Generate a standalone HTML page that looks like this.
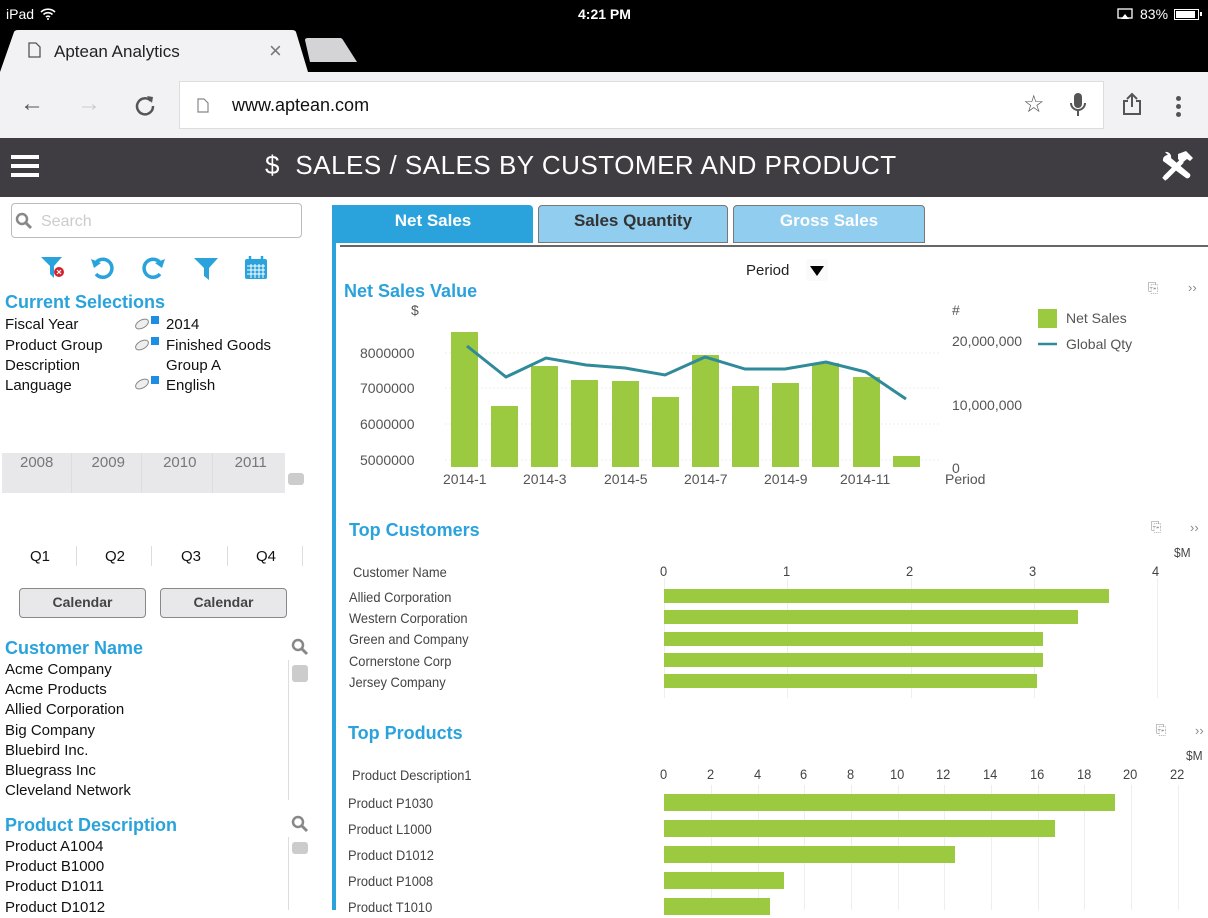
<!DOCTYPE html>
<html><head><meta charset="utf-8"><style>
*{margin:0;padding:0;box-sizing:border-box}
body{width:1208px;height:910px;overflow:hidden;background:#fff;font-family:"Liberation Sans",sans-serif;position:relative;color:#111}
.a{position:absolute;white-space:nowrap}
.blue{color:#2aa3dc;font-weight:bold}
.g{background:#9bc93f;position:absolute}
.lbl{position:absolute;font-size:14px;color:#444;white-space:nowrap;transform:scaleX(.92);transform-origin:left}
.vl{position:absolute;width:1px;background:#eee}
</style></head><body>
<!-- status bar + tabs -->
<div class="a" style="left:0;top:0;width:1208px;height:72px;background:#000"></div>
<div class="a" style="left:6px;top:6px;color:#fff;font-size:14px">iPad</div>
<svg class="a" style="left:40px;top:8px" width="16" height="12" viewBox="0 0 16 12"><path d="M1 4a10 10 0 0 1 14 0M3.5 6.5a6.5 6.5 0 0 1 9 0M6 9a3 3 0 0 1 4 0" stroke="#fff" stroke-width="1.6" fill="none"/><circle cx="8" cy="11" r="1" fill="#fff"/></svg>
<div class="a" style="left:578px;top:6px;color:#fff;font-size:14px;font-weight:bold">4:21 PM</div>
<svg class="a" style="left:1117px;top:8px" width="16" height="12"><rect x="1" y="1" width="14" height="9" fill="none" stroke="#fff" stroke-width="1.3"/><path d="M4 11L8 6L12 11Z" fill="#fff"/></svg>
<div class="a" style="left:1140px;top:6px;color:#fff;font-size:14px">83%</div>
<div class="a" style="left:1174px;top:9px;width:25px;height:11px;border:1px solid #fff;padding:1px"><div style="width:19px;height:7px;background:#fff"></div></div>
<div class="a" style="left:1200px;top:12px;width:2px;height:4px;background:#fff"></div>
<svg class="a" style="left:0;top:30px" width="370" height="42"><path d="M0 42L14 2Q15 0 18 0H292Q295 0 296 2L308 42Z" fill="#f2f1f4"/><path d="M305 10Q305 8 308 8H340Q342 8 343 10L357 32H310Z" fill="#d4d3d6"/></svg>
<svg class="a" style="left:28px;top:42px" width="13" height="16"><path d="M1 1H8L12 5V15H1Z" fill="none" stroke="#555" stroke-width="1.3"/></svg>
<div class="a" style="left:54px;top:42px;font-size:17px;color:#222">Aptean Analytics</div>
<div class="a" style="left:269px;top:38px;font-size:22px;color:#777">×</div>
<!-- toolbar -->
<div class="a" style="left:0;top:72px;width:1208px;height:66px;background:#f2f1f4"></div>
<div class="a" style="left:20px;top:90px;font-size:24px;color:#555">←</div>
<div class="a" style="left:77px;top:90px;font-size:24px;color:#ccc">→</div>
<svg class="a" style="left:134px;top:94px" width="22" height="22"><path d="M17 7A8 8 0 1 0 19 12" fill="none" stroke="#555" stroke-width="2.5"/><path d="M13 2L19 3L18 9Z" fill="#555"/></svg>
<div class="a" style="left:179px;top:81px;width:925px;height:48px;background:#fff;border:1px solid #ddd"></div>
<svg class="a" style="left:197px;top:98px" width="12" height="15"><path d="M1 1H7L11 5V14H1Z" fill="none" stroke="#888" stroke-width="1.2"/></svg>
<div class="a" style="left:232px;top:95px;font-size:18px;color:#111">www.aptean.com</div>
<div class="a" style="left:1023px;top:90px;font-size:24px;color:#555">☆</div>
<svg class="a" style="left:1068px;top:92px" width="20" height="26"><rect x="6" y="1" width="8" height="15" rx="4" fill="#555"/><path d="M3 11A7 7 0 0 0 17 11M10 18V24" stroke="#555" stroke-width="2" fill="none"/></svg>
<svg class="a" style="left:1121px;top:92px" width="22" height="24"><path d="M7 9H3V22H19V9H15M11 15V2M6 7L11 2L16 7" stroke="#555" stroke-width="2" fill="none"/></svg>
<div class="a" style="left:1176px;top:96px;width:5px;height:5px;border-radius:3px;background:#555;box-shadow:0 8px 0 #555,0 16px 0 #555"></div>
<!-- header -->
<div class="a" style="left:0;top:138px;width:1208px;height:59px;background:#3f3d41"></div>
<div class="a" style="left:11px;top:155px;width:28px;height:4px;background:#fff;box-shadow:0 9px 0 #fff,0 18px 0 #fff"></div>
<div class="a" style="left:265px;top:150px;font-size:26px;color:#fff;letter-spacing:.5px">$&nbsp; SALES / SALES BY CUSTOMER AND PRODUCT</div>
<svg class="a" style="left:1160px;top:151px" width="34" height="30" viewBox="0 0 34 30"><path d="M5 27L22 10M4 25L7 28" stroke="#fff" stroke-width="5"/><path d="M18 3L26 0L33 7L30 10L27 8L22 12L18 8Z" fill="#fff"/><path d="M8 4A5 5 0 0 0 3 10L26 27A3 3 0 0 0 30 23L11 7A5 5 0 0 0 5 1L8 4Z" fill="#fff"/></svg>
<!-- left panel -->
<div class="a" style="left:11px;top:203px;width:291px;height:35px;border:1px solid #bbb;border-radius:4px"></div>
<svg class="a" style="left:15px;top:212px" width="18" height="18"><circle cx="7" cy="7" r="5" fill="none" stroke="#888" stroke-width="2.5"/><path d="M11 11L16 16" stroke="#888" stroke-width="3"/></svg>
<div class="a" style="left:41px;top:213px;font-size:16px;color:#ccc">Search</div>
<svg class="a" style="left:40px;top:256px" width="26" height="24"><path d="M1 1H22L14 10V22L10 18V10Z" fill="#2aa3dc"/><circle cx="19" cy="16" r="5" fill="#d3232c"/><path d="M17 14L21 18M21 14L17 18" stroke="#fff" stroke-width="1.2"/></svg>
<svg class="a" style="left:90px;top:256px" width="26" height="24"><path d="M5 8A9 9 0 1 1 6 18" fill="none" stroke="#2aa3dc" stroke-width="3.5"/><path d="M1 3L4 12L11 7Z" fill="#2aa3dc"/></svg>
<svg class="a" style="left:140px;top:256px" width="26" height="24"><path d="M21 8A9 9 0 1 0 20 18" fill="none" stroke="#2aa3dc" stroke-width="3.5"/><path d="M25 3L22 12L15 7Z" fill="#2aa3dc"/></svg>
<svg class="a" style="left:193px;top:256px" width="26" height="24"><path d="M1 2H25L16 12V24L11 20V12Z" fill="#2aa3dc"/></svg>
<svg class="a" style="left:244px;top:255px" width="24" height="25"><rect x="1" y="4" width="22" height="20" rx="2" fill="#2aa3dc"/><path d="M6 1V6M18 1V6" stroke="#2aa3dc" stroke-width="2.5"/><path d="M3 11H21M3 15H21M3 19H21M7 9V23M11 9V23M15 9V23M19 9V23" stroke="#fff" stroke-width="1"/></svg>
<div class="a blue" style="left:5px;top:292px;font-size:18px">Current Selections</div>
<div class="a" style="left:5px;top:315px;font-size:15px;line-height:20px">Fiscal Year<br><span style="line-height:21px">Product Group</span><br>Description<br>Language</div>
<div class="a" style="left:166px;top:315px;font-size:15px;line-height:20px">2014<br><span style="line-height:21px">Finished Goods</span><br>Group A<br>English</div>
<svg class="a" style="left:134px;top:316px" width="28" height="14"><ellipse cx="8" cy="8" rx="7" ry="4" transform="rotate(-30 8 8)" fill="#eee" stroke="#888"/><rect x="17" y="0" width="8" height="8" fill="#1e8ee5"/></svg>
<svg class="a" style="left:134px;top:337px" width="28" height="14"><ellipse cx="8" cy="8" rx="7" ry="4" transform="rotate(-30 8 8)" fill="#eee" stroke="#888"/><rect x="17" y="0" width="8" height="8" fill="#1e8ee5"/></svg>
<svg class="a" style="left:134px;top:376px" width="28" height="14"><ellipse cx="8" cy="8" rx="7" ry="4" transform="rotate(-30 8 8)" fill="#eee" stroke="#888"/><rect x="17" y="0" width="8" height="8" fill="#1e8ee5"/></svg>
<div class="a" style="left:2px;top:453px;width:283px;height:40px;background:#e8e7ea"></div>
<div class="a" style="left:71px;top:453px;width:1px;height:40px;background:#ddd"></div>
<div class="a" style="left:141px;top:453px;width:1px;height:40px;background:#ddd"></div>
<div class="a" style="left:212px;top:453px;width:1px;height:40px;background:#ddd"></div>
<div class="a" style="left:20px;top:454px;font-size:15px;color:#777;word-spacing:34px">2008 2009 2010 2011</div>
<div class="a" style="left:288px;top:473px;width:16px;height:12px;background:#ccc;border-radius:3px"></div>
<div class="a" style="left:30px;top:548px;font-size:15px">Q1</div>
<div class="a" style="left:105px;top:548px;font-size:15px">Q2</div>
<div class="a" style="left:181px;top:548px;font-size:15px">Q3</div>
<div class="a" style="left:256px;top:548px;font-size:15px">Q4</div>
<div class="a" style="left:76px;top:546px;width:1px;height:20px;background:#ddd"></div>
<div class="a" style="left:151px;top:546px;width:1px;height:20px;background:#ddd"></div>
<div class="a" style="left:227px;top:546px;width:1px;height:20px;background:#ddd"></div>
<div class="a" style="left:302px;top:546px;width:1px;height:20px;background:#ddd"></div>
<div class="a" style="left:19px;top:588px;width:127px;height:30px;background:#e8e7ea;border:1px solid #888;border-radius:4px;font-size:14px;font-weight:bold;color:#444;text-align:center;line-height:26px">Calendar</div>
<div class="a" style="left:160px;top:588px;width:127px;height:30px;background:#e8e7ea;border:1px solid #888;border-radius:4px;font-size:14px;font-weight:bold;color:#444;text-align:center;line-height:26px">Calendar</div>
<div class="a blue" style="left:5px;top:638px;font-size:18px">Customer Name</div>
<svg class="a" style="left:291px;top:638px" width="18" height="18"><circle cx="7" cy="7" r="5" fill="none" stroke="#888" stroke-width="2.5"/><path d="M11 11L16 16" stroke="#888" stroke-width="3"/></svg>
<div class="a" style="left:5px;top:660px;font-size:15px;line-height:20.2px">Acme Company<br>Acme Products<br>Allied Corporation<br>Big Company<br>Bluebird Inc.<br>Bluegrass Inc<br>Cleveland Network</div>
<div class="a" style="left:288px;top:660px;width:1px;height:140px;background:#ddd"></div>
<div class="a" style="left:292px;top:665px;width:16px;height:17px;background:#ccc;border-radius:3px"></div>
<div class="a blue" style="left:5px;top:815px;font-size:18px">Product Description</div>
<svg class="a" style="left:291px;top:815px" width="18" height="18"><circle cx="7" cy="7" r="5" fill="none" stroke="#888" stroke-width="2.5"/><path d="M11 11L16 16" stroke="#888" stroke-width="3"/></svg>
<div class="a" style="left:5px;top:837px;font-size:15px;line-height:20.2px">Product A1004<br>Product B1000<br>Product D1011<br>Product D1012</div>
<div class="a" style="left:288px;top:837px;width:1px;height:73px;background:#ddd"></div>
<div class="a" style="left:292px;top:842px;width:16px;height:12px;background:#ccc;border-radius:3px"></div>
<!-- right panel -->
<div class="a" style="left:332px;top:205px;width:4px;height:705px;background:#2aa3dc"></div>
<div class="a" style="left:333px;top:205px;width:200px;height:38px;background:#2aa3dc;border-radius:4px 4px 0 0;color:#fff;font-size:17px;font-weight:bold;text-align:center;line-height:32px">Net Sales</div>
<div class="a" style="left:538px;top:205px;width:190px;height:38px;background:#90cdee;border:1px solid #777;border-radius:4px 4px 0 0;color:#333;font-size:17px;font-weight:bold;text-align:center;line-height:30px">Sales Quantity</div>
<div class="a" style="left:733px;top:205px;width:192px;height:38px;background:#90cdee;border:1px solid #777;border-radius:4px 4px 0 0;color:#fff;font-size:17px;font-weight:bold;text-align:center;line-height:30px">Gross Sales</div>
<div class="a" style="left:340px;top:245px;width:868px;height:2px;background:#666"></div>
<div class="a" style="left:746px;top:262px;font-size:15px;color:#222">Period</div>
<div class="a" style="left:806px;top:259px;width:22px;height:22px;background:#fafafa;border-radius:3px"></div>
<div class="a" style="left:810px;top:266px;width:0;height:0;border-left:7px solid transparent;border-right:7px solid transparent;border-top:10px solid #000"></div>
<div class="a blue" style="left:344px;top:281px;font-size:18px">Net Sales Value</div>
<div class="a" style="left:1148px;top:280px;font-size:13px;color:#888">⎘</div>
<div class="a" style="left:1188px;top:280px;font-size:13px;color:#888">››</div>
<svg class="a" style="left:340px;top:295px" width="868" height="200">
<g stroke="#eee" stroke-dasharray="2 2"><line x1="105" y1="58" x2="600" y2="58"/><line x1="105" y1="93" x2="600" y2="93"/><line x1="105" y1="129" x2="600" y2="129"/><line x1="105" y1="165" x2="600" y2="165"/></g>
<g fill="#9bc93f">
<rect x="111" y="37" width="27" height="135"/><rect x="151" y="111" width="27" height="61"/><rect x="191" y="71" width="27" height="101"/><rect x="231" y="85" width="27" height="87"/><rect x="272" y="86" width="27" height="86"/><rect x="312" y="102" width="27" height="70"/><rect x="352" y="60" width="27" height="112"/><rect x="392" y="91" width="27" height="81"/><rect x="432" y="88" width="27" height="84"/><rect x="472" y="68" width="27" height="104"/><rect x="513" y="82" width="27" height="90"/><rect x="553" y="161" width="27" height="11"/></g>
<polyline points="127,51 166,82 206,63 246,70 285,73 325,80 365,62 405,74 445,74 486,67 526,77 566,104" fill="none" stroke="#2f8a9a" stroke-width="3"/>
<g font-family="Liberation Sans" font-size="14" fill="#555"><text x="71" y="20">$</text><text x="20" y="63">8000000</text><text x="20" y="98">7000000</text><text x="20" y="134">6000000</text><text x="20" y="170">5000000</text>
<text x="103" y="189">2014-1</text><text x="183" y="189">2014-3</text><text x="264" y="189">2014-5</text><text x="344" y="189">2014-7</text><text x="424" y="189">2014-9</text><text x="500" y="189">2014-11</text>
<text x="612" y="20">#</text><text x="612" y="51">20,000,000</text><text x="612" y="115">10,000,000</text><text x="612" y="178">0</text><text x="605" y="189">Period</text>
<text x="726" y="28">Net Sales</text><text x="726" y="54">Global Qty</text></g>
<rect x="698" y="14" width="19" height="19" fill="#9bc93f"/><line x1="698" y1="49" x2="717" y2="49" stroke="#2f8a9a" stroke-width="2.5"/>
</svg>
<!-- top customers -->
<div class="a blue" style="left:349px;top:520px;font-size:18px">Top Customers</div>
<div class="a" style="left:1151px;top:519px;font-size:13px;color:#888">⎘</div>
<div class="a" style="left:1190px;top:520px;font-size:13px;color:#888">››</div>
<div class="lbl" style="left:1174px;top:545px;font-size:13px">$M</div>
<div class="vl" style="left:664px;top:578px;height:120px"></div><div class="vl" style="left:787px;top:578px;height:120px"></div><div class="vl" style="left:911px;top:578px;height:120px"></div><div class="vl" style="left:1034px;top:578px;height:120px"></div><div class="vl" style="left:1157px;top:578px;height:120px"></div>
<div class="lbl" style="left:353px;top:564px">Customer Name</div>
<div class="lbl" style="left:660px;top:563px">0</div><div class="lbl" style="left:783px;top:563px">1</div><div class="lbl" style="left:906px;top:563px">2</div><div class="lbl" style="left:1029px;top:563px">3</div><div class="lbl" style="left:1152px;top:563px">4</div>
<div class="lbl" style="left:349px;top:589px">Allied Corporation</div><div class="g" style="left:664px;top:589px;width:445px;height:14px"></div>
<div class="lbl" style="left:349px;top:610px">Western Corporation</div><div class="g" style="left:664px;top:610px;width:414px;height:14px"></div>
<div class="lbl" style="left:349px;top:631px">Green and Company</div><div class="g" style="left:664px;top:632px;width:379px;height:14px"></div>
<div class="lbl" style="left:349px;top:653px">Cornerstone Corp</div><div class="g" style="left:664px;top:653px;width:379px;height:14px"></div>
<div class="lbl" style="left:349px;top:674px">Jersey Company</div><div class="g" style="left:664px;top:674px;width:373px;height:14px"></div>
<!-- top products -->
<div class="a blue" style="left:348px;top:723px;font-size:18px">Top Products</div>
<div class="a" style="left:1156px;top:722px;font-size:13px;color:#888">⎘</div>
<div class="a" style="left:1195px;top:723px;font-size:13px;color:#888">››</div>
<div class="lbl" style="left:1186px;top:748px;font-size:13px">$M</div>
<div class="lbl" style="left:352px;top:767px">Product Description1</div>
<div class="lbl" style="left:660px;top:766px;word-spacing:0">0</div><div class="lbl" style="left:707px;top:766px">2</div><div class="lbl" style="left:754px;top:766px">4</div><div class="lbl" style="left:800px;top:766px">6</div><div class="lbl" style="left:847px;top:766px">8</div><div class="lbl" style="left:890px;top:766px">10</div><div class="lbl" style="left:936px;top:766px">12</div><div class="lbl" style="left:983px;top:766px">14</div><div class="lbl" style="left:1030px;top:766px">16</div><div class="lbl" style="left:1077px;top:766px">18</div><div class="lbl" style="left:1123px;top:766px">20</div><div class="lbl" style="left:1170px;top:766px">22</div>
<div class="vl" style="left:711px;top:785px;height:125px"></div><div class="vl" style="left:758px;top:785px;height:125px"></div><div class="vl" style="left:804px;top:785px;height:125px"></div><div class="vl" style="left:851px;top:785px;height:125px"></div><div class="vl" style="left:898px;top:785px;height:125px"></div><div class="vl" style="left:944px;top:785px;height:125px"></div><div class="vl" style="left:991px;top:785px;height:125px"></div><div class="vl" style="left:1038px;top:785px;height:125px"></div><div class="vl" style="left:1084px;top:785px;height:125px"></div><div class="vl" style="left:1131px;top:785px;height:125px"></div><div class="vl" style="left:1178px;top:785px;height:125px"></div>
<div class="lbl" style="left:348px;top:795px">Product P1030</div><div class="g" style="left:664px;top:794px;width:451px;height:17px"></div>
<div class="lbl" style="left:348px;top:821px">Product L1000</div><div class="g" style="left:664px;top:820px;width:391px;height:17px"></div>
<div class="lbl" style="left:348px;top:847px">Product D1012</div><div class="g" style="left:664px;top:846px;width:291px;height:17px"></div>
<div class="lbl" style="left:348px;top:873px">Product P1008</div><div class="g" style="left:664px;top:872px;width:120px;height:17px"></div>
<div class="lbl" style="left:348px;top:899px">Product T1010</div><div class="g" style="left:664px;top:898px;width:106px;height:17px"></div>
</body></html>
